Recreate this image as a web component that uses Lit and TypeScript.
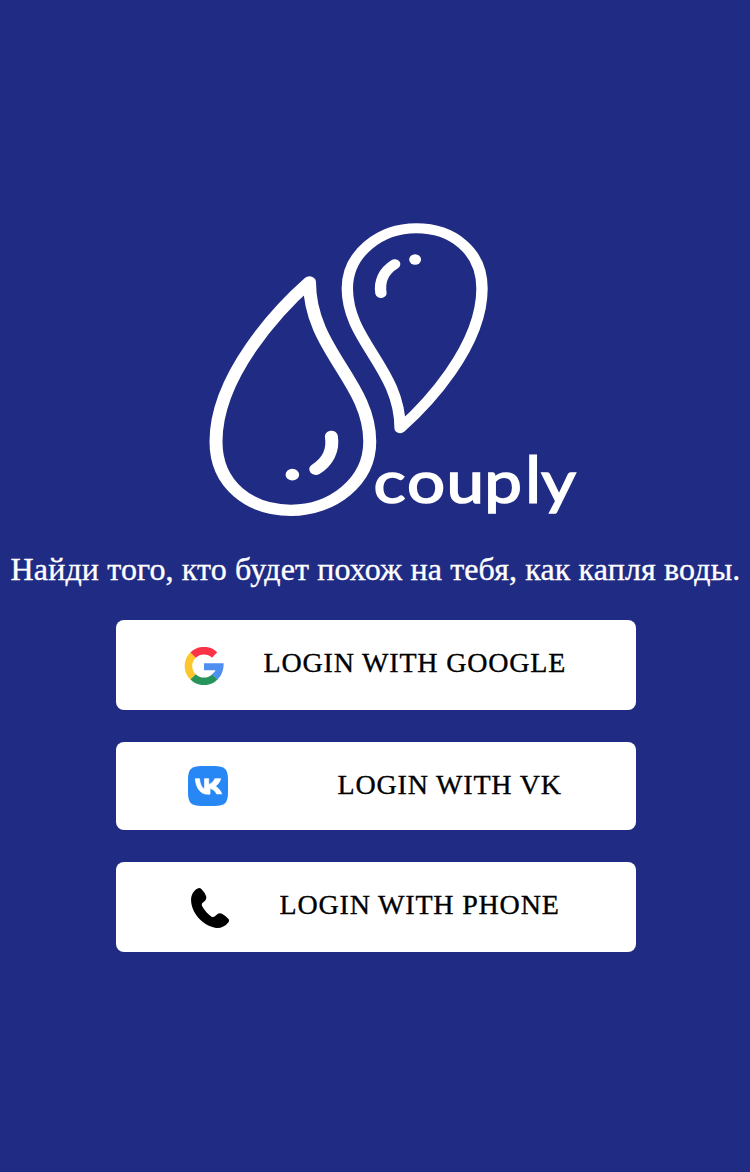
import { LitElement, html, css, svg } from "lit";
import { customElement, property } from "lit/decorators.js";

const drop = svg`
  <path d="M81.3 0C55.65 26 0 93 0 159.5C0 203 29.6 228.3 65.2 228.3C100.9 228.3 133.7 200 133.7 159.5C133.7 100 81.3 68 81.3 0Z"/>
  <path d="M100.3 154.3C102.3 168 97 180 86.7 187.3"/>
  <circle cx="66.4" cy="192.7" r="5.9" fill="#fff" stroke="none"/>`;

@customElement("couply-logo")
class CouplyLogo extends LitElement {
  static styles = css`
    :host { display: block; }
    svg { display: block; }
    .word { font-family: Lato, sans-serif; font-weight: 400; font-size: 58px; fill: #fff; stroke: #fff; stroke-width: 1.6px; }
    .tall { font-size: 65px; stroke-width: 0.9px; }
  `;
  render() {
    return html`<svg width="380" height="310" viewBox="200 215 380 310" fill="none">
      <g stroke="#fff" stroke-width="11.3" stroke-linecap="round" stroke-linejoin="round">
        <g transform="translate(216 282) scale(1.15 1)">${drop}</g>
        <g transform="translate(482 428.3) scale(-1.0074 -0.876)">${drop}</g>
      </g>
      <text class="word" transform="translate(375 502.5) scale(1.16 1)" y="0" x="-1.4 27.6 61.6 94.3 128.7 143.3">coup<tspan class="tall">l</tspan>y</text>
    </svg>`;
  }
}

const icons: Record<string, unknown> = {
  google: html`<svg width="40" height="38" viewBox="0 0 40 38" fill="none">
    <g stroke-width="7.6">
      <path stroke="#fcc62d" d="M9.1 8.1A15.4 15.2 0 0 0 9.1 29.9"/>
      <path stroke="#fc3347" d="M9.1 8.1A15.4 15.2 0 0 1 30.6 7.9"/>
      <path stroke="#27945c" d="M9.1 29.9A15.4 15.2 0 0 0 30.9 29.9"/>
    </g>
    <path fill="#4f8ff0" d="M20 16.3H39.6C39.9 23 37.5 28.8 33.4 32.7L27.9 27.2C29.6 26 31 24.8 31.6 23.3H20Z"/>
  </svg>`,
  vk: html`<svg width="40" height="40" viewBox="0 0 40 40">
    <path fill="#2787f5" d="M0 14C0 3 3 0 14 0H26C37 0 40 3 40 14V26C40 37 37 40 26 40H14C3 40 0 37 0 26Z"/>
    <path fill="#fff" stroke="#fff" stroke-width=".7" stroke-linejoin="round" transform="translate(.5 .2)" d="M19 28C12 28 7.6 22 6.8 12.5H11C11.5 18.5 13.8 21.8 16 22.6V12.5H20.2V18.2C22.7 17.8 25.2 15.4 26.3 12.5H32.2C31.4 15.8 29 18.6 26.9 20C29 21.3 31.9 23.8 33.3 27.7H28.2C26.9 25 24.4 22.8 21.5 22.4V28Z"/>
  </svg>`,
  phone: html`<svg width="38" height="40" viewBox="0 0 38 40">
    <path d="M6.6 .5Q8.8 -.6 10.6 1.2Q14 4.6 15.2 8.4Q15.8 11.2 13.8 13L11.4 15Q10.2 16.4 11.3 18.4C13.8 22.4 17 26.2 20.2 28.4Q22 29.6 23.6 28.6L26 26.4Q28.3 24.4 31 25.8Q34.8 27.9 37.5 31Q38.7 32.8 37.3 34.4C33.8 38.7 29 40.6 24 39.7C10.8 37.2 .3 24 .1 12.5C-.1 7.3 2.4 2.5 6.6 .5Z"/>
  </svg>`,
};

@customElement("login-button")
class LoginButton extends LitElement {
  @property() icon = "google";
  @property() label = "";
  static styles = css`
    :host { display: block; width: 520px; }
    button { width: 100%; height: 90px; padding: 0; border: 0; border-radius: 8px; background: #fff;
      display: flex; align-items: flex-start; color: #000;
      font: 28px/32px "Liberation Serif", serif; white-space: nowrap; }
    svg { display: block; }
    .google .icon { padding: 27px 0 0 68px; }
    .vk { height: 88px; }
    .vk .icon { padding: 24px 0 0 72px; }
    .phone .icon { padding: 26px 0 0 75px; }
    .label { padding-top: 27px; letter-spacing: 0.82px; -webkit-text-stroke: 0.35px #000; }
    .google .label { padding-left: 39.5px; }
    .vk .label { padding-left: 109.5px; }
    .phone .label { padding-left: 50.5px; }
  `;
  render() {
    return html`<button class=${this.icon}><span class="icon">${icons[this.icon]}</span><span class="label">${this.label}</span></button>`;
  }
}

@customElement("app-root")
class AppRoot extends LitElement {
  static styles = css`
    :host { display: flex; flex-direction: column; align-items: center; box-sizing: border-box;
      height: 1172px; padding-top: 215px; background: #202b83; overflow: hidden; }
    couply-logo { margin-left: 30px; }
    p { margin: 26px 0 0 1px; height: 37px; font: 32px/37px "Liberation Serif", serif; color: #fff;
      letter-spacing: 0.125px; -webkit-text-stroke: 0.35px #fff; white-space: nowrap; }
    nav { display: flex; flex-direction: column; gap: 32px; margin: 32px 0 0 2px; }
  `;
  render() {
    return html`
      <couply-logo></couply-logo>
      <p>Найди того, кто будет похож на тебя, как капля воды.</p>
      <nav>
        <login-button icon="google" label="LOGIN WITH GOOGLE"></login-button>
        <login-button icon="vk" label="LOGIN WITH VK"></login-button>
        <login-button icon="phone" label="LOGIN WITH PHONE"></login-button>
      </nav>`;
  }
}
